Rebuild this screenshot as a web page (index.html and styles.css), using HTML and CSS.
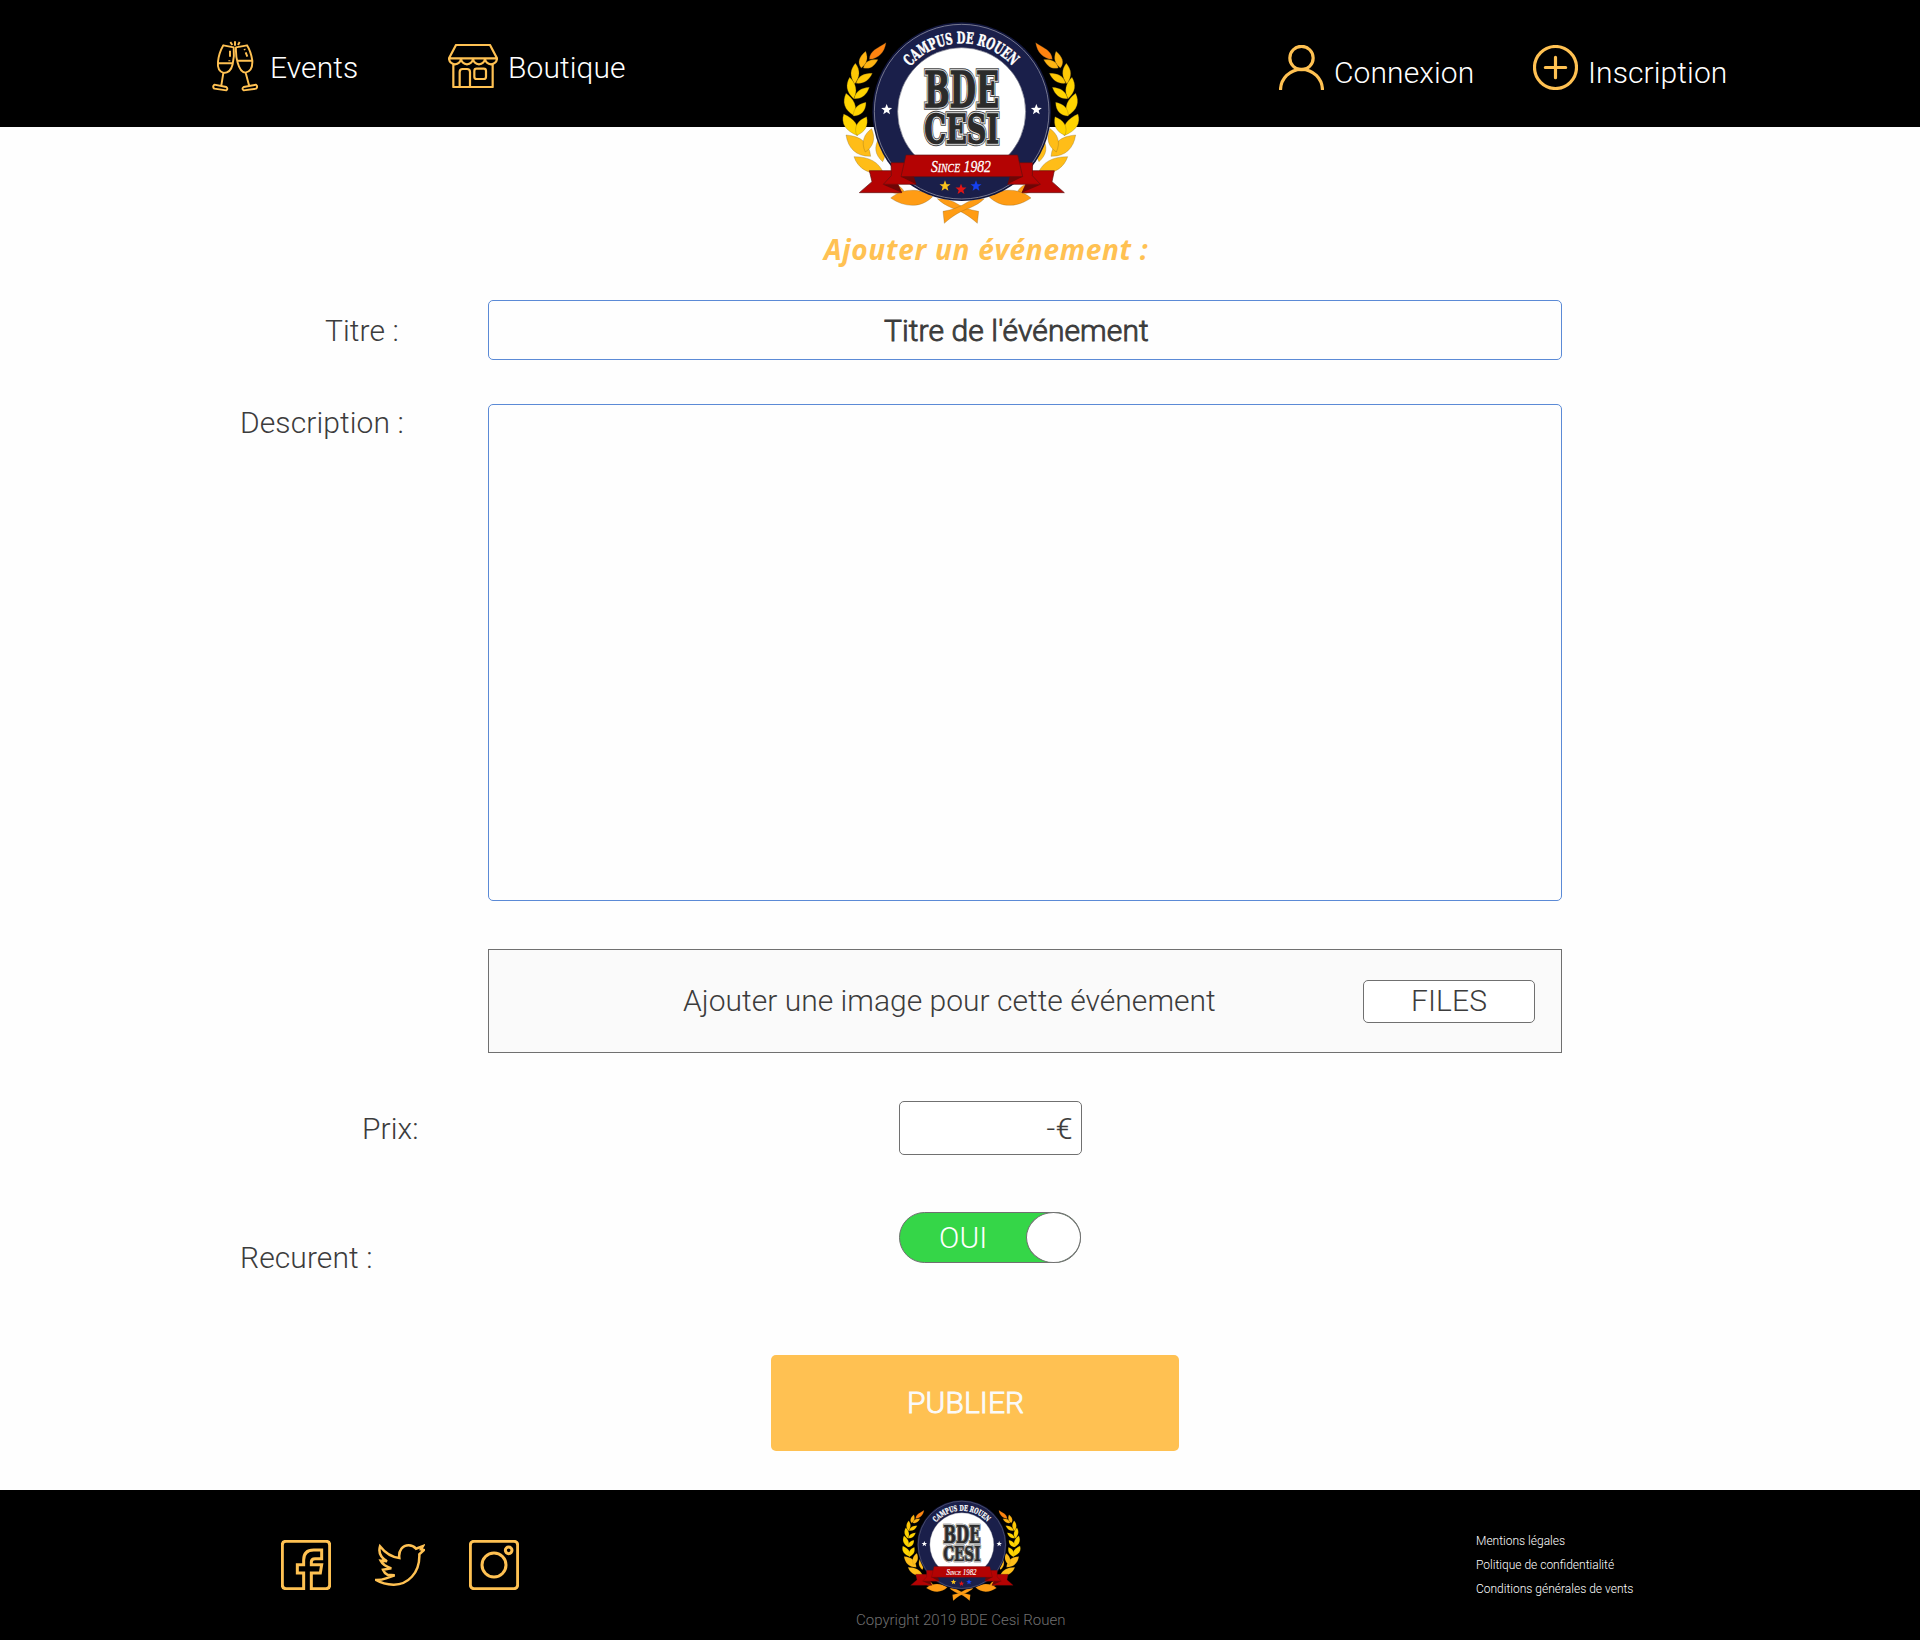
FILE: index.html
```html
<!DOCTYPE html>
<html lang="fr">
<head>
<meta charset="utf-8">
<title>BDE Cesi Rouen - Ajouter un événement</title>
<link rel="stylesheet" href="styles.css">
</head>
<body>
<svg class="defs" aria-hidden="true">
  <defs>
    <path id="star" d="M0 -17L4.5 -5.5L16.5 -5.2L7 2.5L10.2 14L0 7.2L-10.2 14L-7 2.5L-16.5 -5.2L-4.5 -5.5Z"/>
    <path id="arc" d="M270.3 170.5A205 205 0 0 1 579.7 170.5"/>
    <g id="laurel" stroke="#6b5220" stroke-width=".8">
      <path d="M148 148C150 120 172 116 198 98C194 126 176 146 148 148Z" fill="#ff8410"/>
      <g fill="#ffb412">
        <path d="M124 174C110 158 118 140 137 124C146 146 140 162 124 174Z"/>
        <path d="M130 174C136 152 152 148 174 149C162 170 150 178 130 174Z"/>
      </g>
      <g fill="#ffc805">
        <path d="M104 222C88 198 90 180 106 160C122 180 120 202 104 222Z"/>
        <path d="M108 220C116 196 132 190 157 190C146 214 130 222 108 220Z"/>
      </g>
      <g fill="#ffd400">
        <path d="M101 266C78 246 76 224 89 202C108 220 114 244 101 266Z"/>
        <path d="M102 266C108 242 124 234 148 232C140 256 124 268 102 266Z"/>
        <path d="M103 318C72 300 66 276 78 250C102 268 114 290 103 318Z"/>
        <path d="M100 318C100 294 114 282 138 277C138 302 124 318 100 318Z"/>
        <path d="M113 377C76 362 62 340 71 312C102 326 120 346 113 377Z"/>
        <path d="M110 376C100 350 114 330 140 320C146 346 136 366 110 376Z"/>
      </g>
      <g fill="#ffbd18">
        <path d="M152 439C108 440 84 414 78 375C122 378 148 398 152 439Z"/>
        <path d="M136 426C122 396 132 372 155 356C168 386 160 410 136 426Z"/>
        <path d="M190 488C148 496 114 476 102 440C148 440 176 456 190 488Z"/>
        <path d="M188 455C164 434 162 410 176 386C194 408 202 430 188 455Z"/>
      </g>
      <g fill="#ff9c14">
        <path d="M195 524C222 516 242 526 252 544C230 554 208 552 195 524Z"/>
        <path d="M212 564C240 540 290 528 338 560C304 594 256 594 212 564Z"/>
        <path d="M352 566C370 566 388 568 402 576C424 590 448 600 476 604L472 640C446 616 420 602 396 594C378 586 364 578 352 566Z"/>
      </g>
    </g>
    <symbol id="crest" viewBox="0 0 840 660">
      <use href="#laurel"/>
      <use href="#laurel" transform="translate(845 0) scale(-1 1)"/>
      <circle cx="425" cy="305" r="268" fill="#10153c"/>
      <circle cx="425" cy="305" r="262" fill="#1a1f4a" stroke="#8a8ca0" stroke-width="2.500"/>
      <circle cx="425" cy="305" r="192" fill="#fff" stroke="#77798a" stroke-width="2"/>
      <text class="crest-arc" font-size="47"><textPath href="#arc" textLength="347" lengthAdjust="spacingAndGlyphs">CAMPUS DE ROUEN</textPath></text>
      <g class="crest-name" font-size="146">
        <g class="crest-edge"><text x="313" y="292" textLength="224" lengthAdjust="spacingAndGlyphs">BDE</text></g>
        <g class="crest-gap"><text x="313" y="292" textLength="224" lengthAdjust="spacingAndGlyphs">BDE</text></g>
        <g class="crest-face"><text x="313" y="292" textLength="224" lengthAdjust="spacingAndGlyphs">BDE</text></g>
      </g>
      <g class="crest-name" font-size="119">
        <g class="crest-edge"><text x="313" y="400" textLength="224" lengthAdjust="spacingAndGlyphs">CESI</text></g>
        <g class="crest-gap"><text x="313" y="400" textLength="224" lengthAdjust="spacingAndGlyphs">CESI</text></g>
        <g class="crest-face"><text x="313" y="400" textLength="224" lengthAdjust="spacingAndGlyphs">CESI</text></g>
      </g>
      <g fill="#b40303" stroke="#5e1010" stroke-width="2">
        <path d="M148 482H215L245 548H118L156 515Z"/>
        <path d="M703 482H636L606 548H733L696 515Z"/>
        <path d="M213 458H262L288 523H190L214 497Z"/>
        <path d="M638 458H589L563 523H661L637 497Z"/>
        <path d="M258 435H593L608 500H243Z"/>
      </g>
      <path d="M190 524L246 548L234 524ZM661 524L605 548L617 524ZM243 500L288 523L282 500ZM608 500L563 523L569 500Z" fill="#6e0606"/>
      <text class="crest-since" x="333" y="486" textLength="180" lengthAdjust="spacingAndGlyphs"><tspan font-size="52">S</tspan><tspan font-size="37">INCE</tspan><tspan font-size="52"> 1982</tspan></text>
      <use href="#star" x="200" y="299" fill="#fff"/>
      <use href="#star" x="649" y="299" fill="#fff"/>
      <use href="#star" x="375" y="528" fill="#f8c21c"/>
      <use href="#star" x="423" y="538" fill="#e01515"/>
      <use href="#star" x="468" y="528" fill="#1540f0"/>
    </symbol>
  </defs>
</svg>

<header class="header">
  <nav class="nav nav-main">
    <a class="nav-item nav-events">
      <svg class="icon icon-events" viewBox="66 60 138 156" width="46" height="52">
        <path d="M100 76L131 82C133 100 132 115 128 133C124 150 114 159 101 159C87 155 82 143 84 125C86 105 92 90 100 76ZM85 130H128M100 159L94 196M73 194L109 201Q115 206 109 211L73 206Q66 200 73 194Z"/>
        <path d="M171 76L138 82C137 100 138 112 143 128C148 146 154 156 166 158C182 155 188 143 187 122C184 103 180 90 171 76ZM142 122H187M167 158L177 196M198 194L161 201Q154 206 161 211L198 206Q205 200 198 194Z"/>
        <path d="M121 66L127 75M135 64V77M149 66L144 75M120 92V110M118 121V124M167 97L172 110M163 87L165 90"/>
      </svg>
      <span>Events</span>
    </a>
    <a class="nav-item nav-shop">
      <svg class="icon icon-shop" viewBox="774 72 150 132" width="50" height="44">
        <path d="M798 75H900L921 115H777ZM777 115A18 18 0 0 0 813 115A18 18 0 0 0 849 115A18 18 0 0 0 885 115A18 18 0 0 0 921 115M790 132V201H908V132M809 201V156Q809 147 818 147H831Q840 147 840 156V201"/>
        <rect x="853" y="146" width="35" height="31" rx="7"/>
      </svg>
      <span>Boutique</span>
    </a>
  </nav>
  <nav class="nav nav-account">
    <a class="nav-item nav-login">
      <svg class="icon icon-round" viewBox="57 75 135 135" width="45" height="45"><circle cx="124.500" cy="114" r="35"/><path d="M61.500 211A63 63 0 0 1 187.500 211"/></svg>
      <span>Connexion</span>
    </a>
    <a class="nav-item nav-register">
      <svg class="icon icon-round" viewBox="819 75 135 135" width="45" height="45"><circle cx="886.500" cy="142.500" r="63"/><path class="round-cap" d="M856 142.500H917M886.500 112V173"/></svg>
      <span>Inscription</span>
    </a>
  </nav>
  <svg class="logo" width="280" height="220"><use href="#crest"/></svg>
</header>

<main class="main">
  <h1 class="title">Ajouter un événement :</h1>
  <form class="form">
    <div class="row row-title">
      <label class="label label-title">Titre :</label>
      <div class="field field-title"><span>Titre de l'événement</span></div>
    </div>
    <div class="row row-description">
      <label class="label label-description">Description :</label>
      <div class="field field-description"></div>
    </div>
    <div class="row row-image">
      <div class="upload">
        <span class="upload-text">Ajouter une image pour cette événement</span>
        <span class="upload-button"><span>FILES</span></span>
      </div>
    </div>
    <div class="row row-price">
      <label class="label label-price">Prix:</label>
      <div class="price">-€</div>
    </div>
    <div class="row row-repeat">
      <label class="label label-repeat">Recurent :</label>
      <div class="toggle"><span class="toggle-text">OUI</span><span class="knob"></span></div>
    </div>
    <div class="publish"><span>PUBLIER</span></div>
  </form>
</main>

<footer class="footer">
  <div class="social">
    <svg class="icon icon-social" viewBox="63 180 150 150" width="50" height="50"><path d="M131 330V279H112V254H131V240Q131 210 161 210H185V236H165Q154 236 154 246V254H185L181 279H154V326H198Q209 326 209 315V195Q209 184 198 184H78Q67 184 67 195V315Q67 326 78 326H131"/></svg>
    <svg class="icon icon-bird" viewBox="345 180 150 150" width="50" height="50"><path d="M360 199C374 217 395 232 418 234C415 211 428 196 446 196Q459 196 468 206L489 198L483 208L492 210L478 223C480 280 442 315 400 314Q370 313 348 300Q366 300 378 295L404 286L382 284Q373 279 369 269L394 265Q370 258 362 242L381 244Q352 226 360 199Z"/></svg>
    <svg class="icon icon-social" viewBox="627 180 150 150" width="50" height="50"><rect x="631" y="184" width="142" height="142" rx="11"/><circle cx="702" cy="255" r="36"/><circle cx="746" cy="211" r="10"/></svg>
  </div>
  <div class="brand">
    <svg class="brand-logo" width="140" height="110"><use href="#crest"/></svg>
    <p class="copyright">Copyright 2019 BDE Cesi Rouen</p>
  </div>
  <nav class="legal">
    <a>Mentions légales</a>
    <a>Politique de confidentialité</a>
    <a>Conditions générales de vents</a>
  </nav>
</footer>
</body>
</html>
```
FILE: styles.css
```css
* { box-sizing: border-box; }
body {
  margin: 0;
  width: 1920px;
  height: 1640px;
  display: flex;
  flex-direction: column;
  background: #fefefe;
  color: #3c3c3c;
  font: 300 30px/40px Roboto, sans-serif;
  letter-spacing: .1px;
}
.defs { position: absolute; width: 0; height: 0; }
.header {
  position: relative;
  height: 127px;
  flex: none;
  display: flex;
  justify-content: space-between;
  padding: 0 193px 0 212px;
  background: #000;
  color: #fff;
}
.nav { display: flex; white-space: nowrap; }
.nav-item { display: flex; flex: none; align-items: flex-start; }
.nav-main span { margin-top: 48px; }
.nav-account span { margin-top: 53px; }
.nav-events { width: 236px; gap: 12px; }
.nav-shop { gap: 10px; }
.nav-account { width: 448px; }
.nav-login { width: 254px; gap: 10px; }
.nav-register { gap: 10px; }
.icon { flex: none; fill: none; stroke: #ffc152; }
.icon-events { margin-top: 40px; stroke-width: 5.8; stroke-linejoin: round; }
.icon-shop { margin-top: 44px; stroke-width: 6.6; stroke-linejoin: round; }
.icon-round { margin-top: 45px; stroke-width: 9.5; }
.round-cap { stroke-linecap: round; }
.logo { position: absolute; left: 820px; top: 10px; }
.crest-arc { fill: #fff; stroke: #fff; stroke-width: 1.5; font-family: "DejaVu Serif", serif; font-weight: 700; letter-spacing: 0; }
.crest-name { fill: #2b2b2b; font-family: "DejaVu Serif", serif; font-weight: 700; letter-spacing: 0; }
.crest-edge { stroke: #444; stroke-width: 16; }
.crest-gap { stroke: #dedede; stroke-width: 11; }
.crest-face { stroke: #2b2b2b; stroke-width: 4; }
.crest-since { fill: #fff; stroke: #fff; stroke-width: .8; font-family: "Liberation Serif", serif; font-style: italic; font-weight: 400; letter-spacing: 0; }

.main { height: 1363px; flex: none; padding-top: 102px; }
.title {
  margin: 0 0 31px 824px;
  font: italic 700 28px/40px "Open Sans", sans-serif;
  letter-spacing: .7px;
  color: #ffc152;
  white-space: nowrap;
}
.form { display: flex; flex-direction: column; }
.row { display: grid; grid-template-columns: 488px 1074px; align-items: start; }
.row-title { height: 104px; }
.row-description { height: 545px; }
.row-image { height: 152px; }
.row-price { height: 111px; }
.row-repeat { height: 143px; }
.label { white-space: nowrap; }
.label-title { padding: 11px 0 0 325px; }
.label-description { margin-top: -1px; padding-left: 240px; }
.label-price { padding: 8px 0 0 362px; }
.label-repeat { padding: 26px 0 0 240px; }
.field { border: 1px solid #5b8ad6; border-radius: 5px; background: #fefefe; }
.field-title {
  height: 60px;
  padding: 10px 0 0 395px;
  -webkit-text-stroke: .9px #3c3c3c;
}
.field-description { height: 497px; }
.upload {
  grid-column: 2;
  height: 104px;
  display: flex;
  align-items: center;
  justify-content: space-between;
  padding: 0 26px 0 194px;
  border: 1px solid #707070;
  background: #fafafa;
}
.upload-text { letter-spacing: .02px; }
.upload-button {
  width: 172px;
  height: 43px;
  display: flex;
  justify-content: center;
  border: 1px solid #707070;
  border-radius: 5px;
  background: #fff;
}
.price {
  width: 183px;
  height: 54px;
  margin-left: 411px;
  padding: 7px 8px 0 0;
  text-align: right;
  letter-spacing: .6px;
  border: 1px solid #707070;
  border-radius: 5px;
  background: #fff;
  -webkit-text-stroke: .2px #3c3c3c;
}
.toggle {
  width: 182px;
  height: 51px;
  margin-left: 411px;
  display: flex;
  justify-content: space-between;
  border: 1px solid #707070;
  border-radius: 26px;
  background: #35d648;
  color: #fff;
}
.toggle-text { padding: 5px 0 0 39px; }
.knob {
  width: 55px;
  height: 51px;
  margin: -1px -1px 0 0;
  border: 1px solid #707070;
  border-radius: 50%;
  background: #fff;
}
.publish {
  width: 408px;
  height: 96px;
  margin-left: 771px;
  padding: 28px 0 0 136px;
  border-radius: 5px;
  background: #ffc152;
  color: #fafafa;
  -webkit-text-stroke: .9px #fafafa;
}
.footer {
  height: 150px;
  flex: none;
  display: grid;
  grid-template-columns: 520px 956px 1fr;
  background: #000;
}
.social { display: flex; gap: 44px; padding: 50px 0 0 281px; }
.icon-social { stroke-width: 9; }
.icon-bird { stroke-width: 7.5; }
.brand { display: flex; flex-direction: column; padding: 4px 0 0 336px; }
.brand-logo { margin-left: 35px; }
.copyright {
  margin: 6px 0 0;
  font-size: 15px;
  line-height: 20px;
  letter-spacing: 0;
  color: #707070;
  white-space: nowrap;
}
.legal {
  display: flex;
  flex-direction: column;
  padding-top: 39px;
  font-size: 12px;
  line-height: 24px;
  letter-spacing: 0;
  color: #fff;
}
```
